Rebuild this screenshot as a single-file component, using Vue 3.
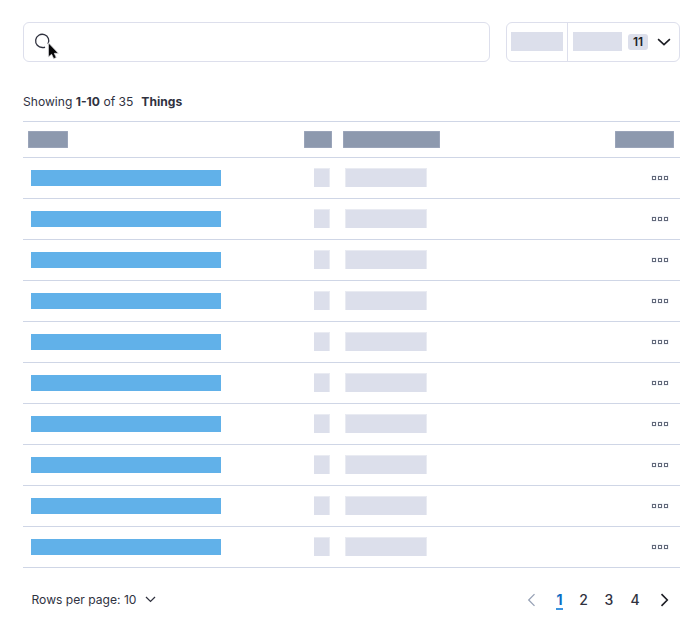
<script setup>
const rows = Array.from({ length: 10 }, (_, i) => i + 1)
const pages = [1, 2, 3, 4]
</script>

<template>
  <main class="page">
    <div class="toolbar">
      <div class="search">
        <svg class="search-icon" width="30" height="30" viewBox="0 0 30 30">
          <path d="M17 14.1 A6.6 6.6 0 1 0 11.4 17.5 Q12.8 17.7 14 17.1" />
          <path d="M17.4 12.8 V27 L20.6 24.3 L22.7 28.7 L25.3 27.6 L23.3 23.3 H27.4 Z" />
        </svg>
      </div>
      <div class="filters">
        <div class="filter first"><span class="block filter-block"></span></div>
        <div class="filter second">
          <span class="block filter-block narrow"></span>
          <span class="badge">11</span>
          <svg class="chevron" width="14" height="8" viewBox="0 0 14 8"><path d="M1.1 1.1 L7 6.7 L12.9 1.1" /></svg>
        </div>
      </div>
    </div>

    <p class="summary"><span>Showing <b>1-10</b> of 35</span><b>Things</b></p>

    <div class="table">
      <div class="row header">
        <span class="head-block h1"></span>
        <span class="head-block h2"></span>
        <span class="head-block h3"></span>
        <span class="head-block h4"></span>
      </div>
      <div v-for="row in rows" :key="row" class="row">
        <span class="name"></span>
        <span class="block small"></span>
        <span class="block medium"></span>
        <span class="actions"><i></i><i></i><i></i></span>
      </div>
    </div>

    <footer class="footer">
      <div class="per-page">
        <span>Rows per page: 10</span>
        <svg width="11" height="7" viewBox="0 0 11 7"><path d="M1 1 L5.5 5.4 L10 1" /></svg>
      </div>
      <nav class="pagination">
        <svg class="prev" width="9" height="14" viewBox="0 0 9 14"><path d="M7.5 1.1 L1.7 7 L7.5 12.9" /></svg>
        <div class="numbers">
          <span v-for="page in pages" :key="page" :class="{ current: page === 1 }">{{ page }}</span>
        </div>
        <svg class="next" width="9" height="14" viewBox="0 0 9 14"><path d="M1.5 1.1 L7.3 7 L1.5 12.9" /></svg>
      </nav>
    </footer>
  </main>
</template>

<style>
body {
  background: #fff;
}
</style>

<style scoped>
.page {
  box-sizing: border-box;
  width: 698px;
  height: 640px;
  padding: 22px 18px 0 23px;
  background: #fff;
  color: #30323f;
  font-family: Inter, sans-serif;
  font-size: 12.1px;
}
svg {
  display: block;
  flex: none;
  overflow: visible;
}
.toolbar {
  display: flex;
  gap: 16px;
  height: 40px;
}
.search,
.filters {
  box-sizing: border-box;
  border: 1px solid #dddfec;
  border-radius: 6px;
}
.search {
  width: 467px;
  padding: 7px 0 0 7px;
}
.filters {
  display: flex;
  width: 174px;
}
.filter {
  display: flex;
  align-items: center;
}
.first {
  box-sizing: border-box;
  width: 61px;
  padding-left: 4px;
  border-right: 1px solid #dddfec;
}
.second {
  padding-left: 5px;
}
.block {
  display: block;
  background: #dcdfeb;
}
.filter-block {
  width: 52px;
  height: 19px;
  margin-bottom: 1px;
}
.narrow {
  width: 49px;
}
.badge {
  width: 20px;
  height: 16px;
  margin: 0 9px 0 6px;
  border-radius: 3px;
  background: #dcdfeb;
  color: #1d1e24;
  font-size: 12px;
  font-weight: 600;
  line-height: 16px;
  text-align: center;
}
path {
  fill: none;
  stroke: #30323f;
  stroke-width: 1.3;
}
.search-icon path:last-child {
  fill: #050507;
  stroke: #dedee2;
  stroke-width: 0.8;
}
.chevron path,
.next path {
  stroke: #1d1e24;
  stroke-width: 1.6;
}
.summary {
  display: flex;
  gap: 8px;
  height: 20px;
  margin: 30px 0 9px;
  line-height: 20px;
}
.summary b {
  font-weight: 700;
}
.table {
  width: 657px;
  border-top: 1px solid #cfd6e6;
}
.row {
  box-sizing: border-box;
  display: grid;
  grid-template-columns: 281px 39px 240px 1fr;
  align-items: center;
  height: 41px;
  border-bottom: 1px solid #cfd6e6;
}
.header {
  height: 36px;
}
.head-block {
  height: 17px;
  background: #8d99ae;
  box-shadow: inset 0 0 0 0.5px #a8b0c3;
}
.h1 {
  width: 40px;
  margin-left: 5px;
}
.h2 {
  width: 28px;
}
.h3 {
  width: 97px;
}
.h4 {
  width: 59px;
  margin-right: 6px;
  justify-self: end;
}
.name {
  width: 190px;
  height: 16px;
  margin-left: 8px;
  background: #61b1e9;
}
.small {
  width: 16px;
  height: 19px;
  margin: 0 0 1px 10px;
  box-shadow: inset -1px 1px #e9ebf2;
}
.medium {
  width: 82px;
  height: 19px;
  margin: 0 0 1px 2px;
  box-shadow: inset 1px 1px #e9ebf2, inset -1px 0 #e9ebf2;
}
.actions {
  display: flex;
  gap: 2px;
  justify-self: end;
  margin-right: 12px;
}
.actions i {
  box-sizing: border-box;
  width: 4px;
  height: 4px;
  border: 1px solid #636a7b;
  box-shadow: 0 0 0 0.5px #e3e5ec;
}
.footer {
  display: flex;
  align-items: center;
  justify-content: space-between;
  height: 24px;
  margin-top: 20px;
  padding: 0 11.5px 0 8.5px;
}
.per-page {
  display: flex;
  align-items: center;
  gap: 9px;
  margin-bottom: 1px;
}
.pagination {
  display: flex;
  align-items: center;
}
.prev path {
  stroke: #98a2b6;
}
.numbers {
  display: grid;
  grid-template-columns: 23px 25px 26px 26px;
  margin: 2px 11.5px 0 12px;
  font-size: 14px;
  font-weight: 500;
  line-height: 16px;
  justify-items: center;
}
.numbers span {
  box-sizing: border-box;
  height: 18px;
  border-bottom: 2px solid transparent;
}
.numbers .current {
  width: 7px;
  display: flex;
  justify-content: center;
  border-color: #3d94df;
  color: #0d6ec4;
  font-weight: 700;
}
</style>
